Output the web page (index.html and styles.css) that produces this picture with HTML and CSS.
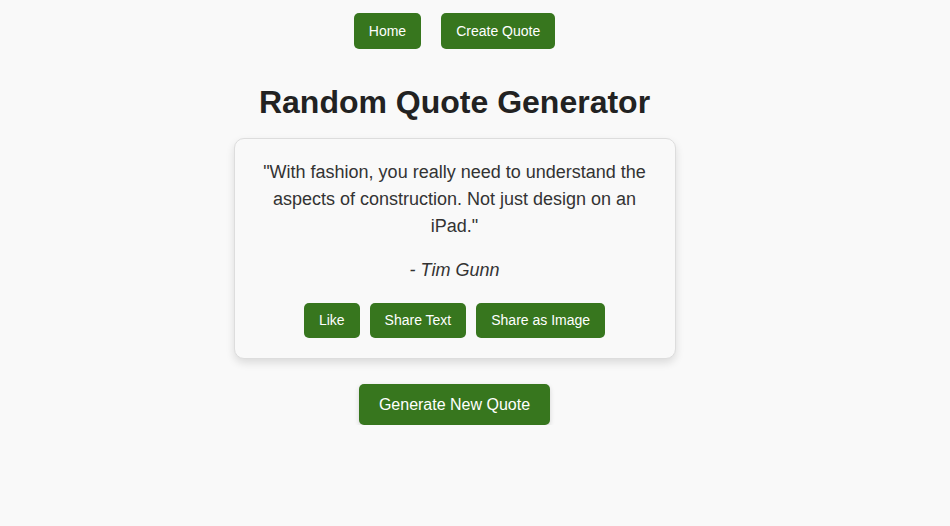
FILE: index.html
```html
<!DOCTYPE html>
<html lang="en">
<head>
<meta charset="utf-8">
<title>Random Quote Generator</title>
<link rel="stylesheet" href="styles.css">
</head>
<body>
<div class="page">
  <nav class="nav">
    <a class="btn nav-btn" href="#">Home</a>
    <a class="btn nav-btn" href="#">Create Quote</a>
  </nav>
  <h1 class="title">Random Quote Generator</h1>
  <div class="card">
    <p class="quote">"With fashion, you really need to understand the aspects of construction. Not just design on an iPad."</p>
    <p class="author">- Tim Gunn</p>
    <div class="actions">
      <button class="btn">Like</button>
      <button class="btn">Share Text</button>
      <button class="btn">Share as Image</button>
    </div>
  </div>
  <button class="btn btn-large">Generate New Quote</button>
</div>
</body>
</html>
```

FILE: styles.css
```css
html, body {
  margin: 0;
  padding: 0;
  background: #f9f9f9;
}
body {
  font-family: "Liberation Sans", Arial, sans-serif;
  color: #333;
}
.page {
  width: 909px;
  display: flex;
  flex-direction: column;
  align-items: center;
  padding-top: 13px;
}
.nav {
  display: flex;
  gap: 20px;
}
.btn {
  display: inline-block;
  background: #37761e;
  color: #fff;
  border: none;
  border-radius: 5px;
  font-family: "Liberation Sans", Arial, sans-serif;
  font-size: 14px;
  line-height: 15px;
  padding: 10px 15px;
  text-decoration: none;
  cursor: pointer;
}
.nav-btn {
  line-height: 16px;
}
.title {
  font-size: 32px;
  line-height: 37px;
  font-weight: bold;
  color: #222;
  margin: 35px 0 17px;
}
.card {
  width: 400px;
  padding: 20px;
  border: 1px solid #ddd;
  border-radius: 10px;
  background: #f9f9f9;
  box-shadow: 0 4px 8px rgba(0, 0, 0, 0.12);
  text-align: center;
}
.quote {
  margin: 0;
  font-size: 18px;
  line-height: 27px;
  color: #333;
}
.author {
  margin: 17px 0 0;
  font-size: 18px;
  line-height: 27px;
  font-style: italic;
  color: #333;
}
.actions {
  margin-top: 19px;
  display: flex;
  justify-content: center;
  gap: 10px;
}
.btn-large {
  margin-top: 25px;
  font-size: 16px;
  line-height: 19px;
  padding: 11px 20px;
  box-shadow: 0 2px 5px rgba(0, 0, 0, 0.15);
}
```
